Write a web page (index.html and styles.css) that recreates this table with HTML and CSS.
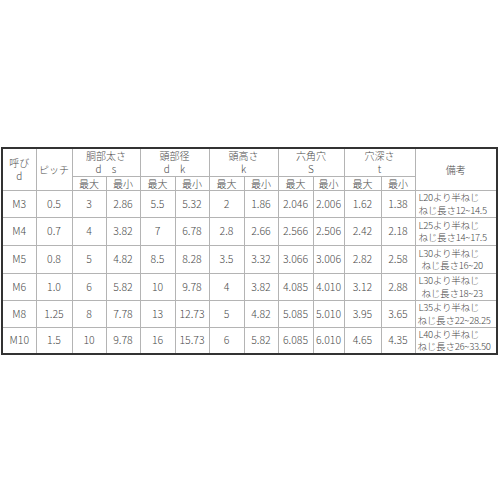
FILE: index.html
```html
<!DOCTYPE html>
<html lang="ja">
<head>
<meta charset="utf-8">
<link rel="stylesheet" href="styles.css">
</head>
<body>
<table class="spec">
  <colgroup>
    <col class="c34"><col class="c36">
    <col class="c34"><col class="c34">
    <col class="c35"><col class="c34">
    <col class="c35"><col class="c34">
    <col class="c35"><col class="c31">
    <col class="c37"><col class="c34">
    <col class="c82">
  </colgroup>
  <thead>
    <tr class="h1">
      <th rowspan="2">呼び<br>d</th>
      <th rowspan="2">ピッチ</th>
      <th colspan="2">胴部太さ<br><span class="sym">d s</span></th>
      <th colspan="2">頭部径<br><span class="sym">d k</span></th>
      <th colspan="2">頭高さ<br><span class="sym">k</span></th>
      <th colspan="2">六角穴<br><span class="sym">S</span></th>
      <th colspan="2">穴深さ<br><span class="sym">t</span></th>
      <th rowspan="2">備考</th>
    </tr>
    <tr class="h2">
      <th>最大</th><th>最小</th>
      <th>最大</th><th>最小</th>
      <th>最大</th><th>最小</th>
      <th>最大</th><th>最小</th>
      <th>最大</th><th>最小</th>
    </tr>
  </thead>
  <tbody>
    <tr class="r27">
      <td>M3</td><td>0.5</td><td>3</td><td>2.86</td><td>5.5</td><td>5.32</td><td>2</td><td>1.86</td><td>2.046</td><td>2.006</td><td>1.62</td><td>1.38</td>
      <td class="note">L20より半ねじ<br>ねじ長さ12~14.5</td>
    </tr>
    <tr class="r28">
      <td>M4</td><td>0.7</td><td>4</td><td>3.82</td><td>7</td><td>6.78</td><td>2.8</td><td>2.66</td><td>2.566</td><td>2.506</td><td>2.42</td><td>2.18</td>
      <td class="note">L25より半ねじ<br>ねじ長さ14~17.5</td>
    </tr>
    <tr class="r28">
      <td>M5</td><td>0.8</td><td>5</td><td>4.82</td><td>8.5</td><td>8.28</td><td>3.5</td><td>3.32</td><td>3.066</td><td>3.006</td><td>2.82</td><td>2.58</td>
      <td class="note">L30より半ねじ<br><span class="indent">ねじ長さ16~20</span></td>
    </tr>
    <tr class="r27">
      <td>M6</td><td>1.0</td><td>6</td><td>5.82</td><td>10</td><td>9.78</td><td>4</td><td>3.82</td><td>4.085</td><td>4.010</td><td>3.12</td><td>2.88</td>
      <td class="note">L30より半ねじ<br><span class="indent">ねじ長さ18~23</span></td>
    </tr>
    <tr class="r27">
      <td>M8</td><td>1.25</td><td>8</td><td>7.78</td><td>13</td><td>12.73</td><td>5</td><td>4.82</td><td>5.085</td><td>5.010</td><td>3.95</td><td>3.65</td>
      <td class="note">L35より半ねじ<br><span class="out">ねじ長さ22~28.25</span></td>
    </tr>
    <tr class="r27">
      <td>M10</td><td>1.5</td><td>10</td><td>9.78</td><td>16</td><td>15.73</td><td>6</td><td>5.82</td><td>6.085</td><td>6.010</td><td>4.65</td><td>4.35</td>
      <td class="note">L40より半ねじ<br><span class="out">ねじ長さ26~33.50</span></td>
    </tr>
  </tbody>
</table>
</body>
</html>
```

FILE: styles.css
```css
html, body {
  margin: 0;
  padding: 0;
  background: #ffffff;
}

body {
  padding-top: 147px;
  padding-left: 1px;
}

.spec {
  border-collapse: collapse;
  table-layout: fixed;
  width: 496px;
  border: 2px solid #333333;
  font-family: "Noto Sans CJK JP", "Noto Sans", sans-serif;
  font-weight: 300;
  font-size: 10.5px;
  color: #4a4a4a;
}

.c31 { width: 31px; }
.c34 { width: 34px; }
.c35 { width: 35px; }
.c36 { width: 36px; }
.c37 { width: 37px; }
.c82 { width: 82px; }

.spec th,
.spec td {
  border: 1px solid #b4b4b4;
  padding: 0;
  text-align: center;
  vertical-align: middle;
  font-weight: 300;
  line-height: 12px;
  white-space: nowrap;
  overflow: hidden;
}

.spec thead th {
  font-size: 10px;
}

.h1 { height: 28px; }
.h1 th { line-height: 13px; }
.h2 { height: 14px; }
.h2 th { line-height: 13px; }
.r27 { height: 27px; }
.r28 { height: 28px; }

.sym {
  letter-spacing: 4px;
  margin-right: -4px;
}

.spec td.note {
  text-align: left;
  padding-left: 3px;
  font-size: 9.6px;
  letter-spacing: -0.3px;
  line-height: 12.5px;
}

.indent {
  padding-left: 3px;
}

.out {
  margin-left: -1px;
}
```
